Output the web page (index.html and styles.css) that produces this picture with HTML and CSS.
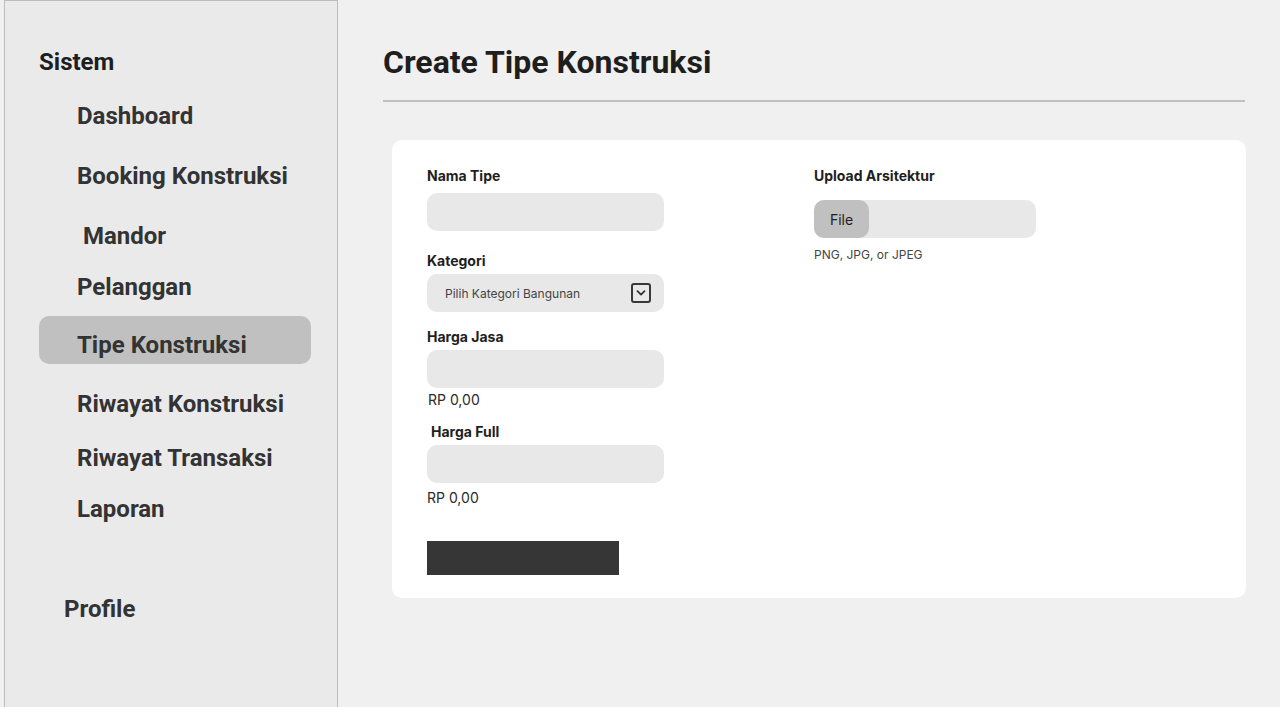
FILE: index.html
```html
<!DOCTYPE html>
<html lang="id">
<head>
<meta charset="utf-8">
<title>Create Tipe Konstruksi</title>
<link rel="stylesheet" href="styles.css">
</head>
<body>
<div class="layout">
  <aside class="sidebar">
    <div class="sidebar-title">Sistem</div>
    <nav class="nav">
      <a class="nav-item nav-dashboard">Dashboard</a>
      <a class="nav-item nav-gap-lg">Booking Konstruksi</a>
      <a class="nav-item nav-gap-lg nav-shift">Mandor</a>
      <a class="nav-item nav-gap-sm">Pelanggan</a>
      <a class="nav-item nav-active">Tipe Konstruksi</a>
      <a class="nav-item nav-gap-md">Riwayat Konstruksi</a>
      <a class="nav-item nav-gap-md">Riwayat Transaksi</a>
      <a class="nav-item nav-gap-sm">Laporan</a>
      <a class="nav-item nav-profile">Profile</a>
    </nav>
  </aside>
  <main class="main">
    <h1 class="page-title">Create Tipe Konstruksi</h1>
    <hr class="divider">
    <section class="card">
      <div class="col col-left">
        <label class="label">Nama Tipe</label>
        <div class="input input-first"></div>
        <label class="label label-kategori">Kategori</label>
        <div class="input select">
          <span class="placeholder">Pilih Kategori Bangunan</span>
          <span class="chevron">
            <svg width="10" height="6" viewBox="0 0 10 6"><path d="M1.5 1.2 L5 4.6 L8.5 1.2" fill="none" stroke="#333" stroke-width="1.8" stroke-linecap="round" stroke-linejoin="round"/></svg>
          </span>
        </div>
        <label class="label label-jasa">Harga Jasa</label>
        <div class="input"></div>
        <div class="price price-jasa">RP 0,00</div>
        <label class="label label-full">Harga Full</label>
        <div class="input"></div>
        <div class="price price-full">RP 0,00</div>
        <button class="submit" type="button"></button>
      </div>
      <div class="col col-right">
        <label class="label">Upload Arsitektur</label>
        <div class="file-input">
          <span class="file-btn">File</span>
        </div>
        <div class="hint">PNG, JPG, or JPEG</div>
      </div>
    </section>
  </main>
</div>
</body>
</html>
```

FILE: styles.css
```css
* { box-sizing: border-box; }

html, body {
  margin: 0;
  padding: 0;
  height: 100%;
  overflow: hidden;
}

body {
  background: #f0f0f0;
  font-family: Roboto, "Liberation Sans", sans-serif;
  color: #1e1e1e;
}

.layout {
  display: flex;
  align-items: flex-start;
}

/* Sidebar */
.sidebar {
  margin-left: 4px;
  width: 334px;
  min-height: 740px;
  flex-shrink: 0;
  background: #eaeaea;
  border: 1px solid #bdbdbd;
  padding: 47px 26px 0 34px;
}

.sidebar-title {
  font-size: 24px;
  font-weight: 700;
  line-height: 28px;
  color: #1e1e1e;
}

.nav {
  display: flex;
  flex-direction: column;
}

.nav-item {
  display: block;
  font-size: 24px;
  font-weight: 700;
  line-height: 28px;
  color: #333333;
  padding-left: 38px;
  text-decoration: none;
}

.nav-dashboard { margin-top: 26px; }
.nav-gap-lg { margin-top: 32px; }
.nav-gap-md { margin-top: 26px; }
.nav-gap-sm { margin-top: 23px; }
.nav-shift { padding-left: 44px; }

.nav-active {
  margin-top: 15px;
  background: #c0c0c0;
  border-radius: 10px;
  padding-top: 15px;
  padding-bottom: 5px;
}

.nav-profile {
  margin-top: 72px;
  padding-left: 25px;
}

/* Main */
.main {
  flex: 1;
  padding: 42px 35px 0 45px;
}

.page-title {
  margin: 0;
  font-size: 32px;
  line-height: 40px;
  font-weight: 700;
  color: #1e1e1e;
}

.divider {
  margin: 18px 0 0 0;
  border: 0;
  height: 2px;
  background: #c0c0c0;
}

.card {
  margin: 38px -1px 0 9px;
  height: 458px;
  background: #ffffff;
  border-radius: 10px;
  padding: 27px 35px 23px 35px;
  display: flex;
  font-family: Inter, Roboto, sans-serif;
}

.col {
  display: flex;
  flex-direction: column;
  align-items: flex-start;
}

.col-left { width: 387px; }

.label {
  display: block;
  font-size: 14px;
  line-height: 17px;
  font-weight: 700;
  color: #1e1e1e;
}

.input {
  width: 237px;
  height: 38px;
  background: #e8e8e8;
  border-radius: 10px;
  margin-top: 5px;
}

.input-first { margin-top: 9px; }

.label-kategori { margin-top: 21px; }
.label-jasa { margin-top: 16px; }
.label-full { margin-top: 15px; padding-left: 4px; }

.select {
  display: flex;
  align-items: center;
  justify-content: space-between;
  padding: 0 13px 0 18px;
}

.placeholder {
  font-size: 12px;
  color: #444444;
}

.chevron {
  width: 20px;
  height: 20px;
  border: 2px solid #383838;
  border-radius: 3px;
  display: flex;
  align-items: center;
  justify-content: center;
}

.price {
  font-size: 14px;
  line-height: 17px;
  color: #2a2a2a;
}

.price-jasa { margin-top: 3px; padding-left: 1px; }
.price-full { margin-top: 6px; }

.submit {
  margin-top: 35px;
  width: 192px;
  height: 34px;
  border: 0;
  padding: 0;
  background: #363636;
}

.file-input {
  margin-top: 16px;
  width: 222px;
  height: 38px;
  background: #e8e8e8;
  border-radius: 10px;
  display: flex;
}

.file-btn {
  width: 55px;
  height: 38px;
  background: #c0c0c0;
  border-radius: 10px;
  display: flex;
  align-items: center;
  justify-content: center;
  font-size: 14px;
  color: #1e1e1e;
}

.hint {
  margin-top: 9px;
  font-size: 12px;
  line-height: 15px;
  color: #444444;
}
```
